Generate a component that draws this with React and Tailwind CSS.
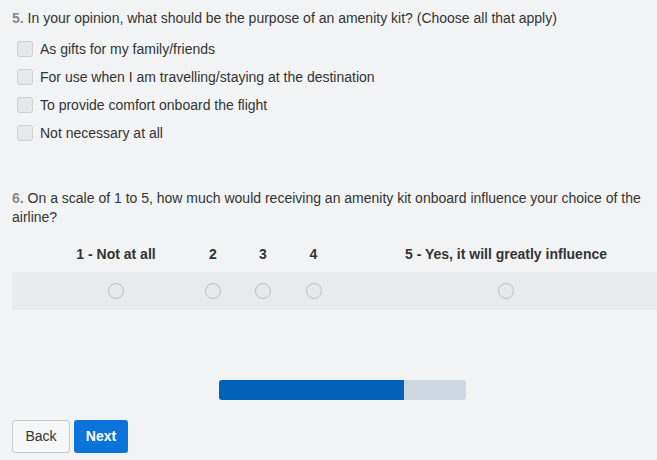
import React from "react";

const options = [
  "As gifts for my family/friends",
  "For use when I am travelling/staying at the destination",
  "To provide comfort onboard the flight",
  "Not necessary at all",
];

const scale = [
  { label: "1 - Not at all", w: "w-[144px]" },
  { label: "2", w: "w-[50px]" },
  { label: "3", w: "w-[50px]" },
  { label: "4", w: "w-[51px]" },
  { label: "5 - Yes, it will greatly influence", w: "w-[334px]" },
];

function Radio() {
  return (
    <span className="inline-block h-[16px] w-[16px] rounded-full border border-[#bdbec0] bg-[#e7e8ea]" />
  );
}

export default function App() {
  return (
    <div
      className="min-h-[460px] w-[657px] overflow-hidden bg-[#f2f3f5] text-[14px] text-[#333333]"
      style={{ fontFamily: '"Liberation Sans", Arial, sans-serif' }}
    >
      {/* Question 5 */}
      <div className="px-[12px] pt-[8px] leading-[20px]">
        <span className="font-bold text-[#8a8a8a]">5.</span> In your opinion,
        what should be the purpose of an amenity kit? (Choose all that apply)
      </div>
      <div className="mt-[7px] pl-[17px]">
        {options.map((o) => (
          <div key={o} className="flex h-[28px] items-center">
            <span className="h-[16px] w-[16px] rounded-[3px] border border-[#cfd0d3] bg-[#e7e8ea]" />
            <span className="ml-[7px] leading-[20px]">{o}</span>
          </div>
        ))}
      </div>

      {/* Question 6 */}
      <div className="mt-[42px] px-[12px] leading-[19px]">
        <span className="font-bold text-[#8a8a8a]">6.</span> On a scale of 1
        to 5, how much would receiving an amenity kit onboard influence your
        choice of the airline?
      </div>

      <div className="mt-[17px] ml-[12px]">
        <div className="flex h-[20px] items-center font-bold leading-[20px]">
          <div className="w-[32px] shrink-0" />
          {scale.map((s) => (
            <div key={s.label} className={`${s.w} shrink-0 text-center`}>
              {s.label}
            </div>
          ))}
        </div>
        <div className="mt-[8px] flex h-[38px] items-center bg-[#e9eaec]">
          <div className="w-[32px] shrink-0" />
          {scale.map((s) => (
            <div
              key={s.label}
              className={`${s.w} flex shrink-0 items-center justify-center`}
            >
              <Radio />
            </div>
          ))}
        </div>
      </div>

      {/* Progress */}
      <div className="mt-[70px] flex justify-center pl-[28px]">
        <div className="h-[20px] w-[247px] overflow-hidden rounded-[3px] bg-[#cdd8e0]">
          <div className="h-full bg-[#0062b8]" style={{ width: "75%" }} />
        </div>
      </div>

      {/* Nav */}
      <div className="mt-[20px] flex gap-[4px] px-[12px]">
        <button className="h-[33px] w-[58px] rounded-[3px] border border-[#c6c7c9] bg-[#f5f6f7] text-[14px] text-[#333333]">
          Back
        </button>
        <button className="h-[33px] w-[54px] rounded-[3px] bg-[#0a74da] text-[14px] font-bold text-white">
          Next
        </button>
      </div>
    </div>
  );
}
